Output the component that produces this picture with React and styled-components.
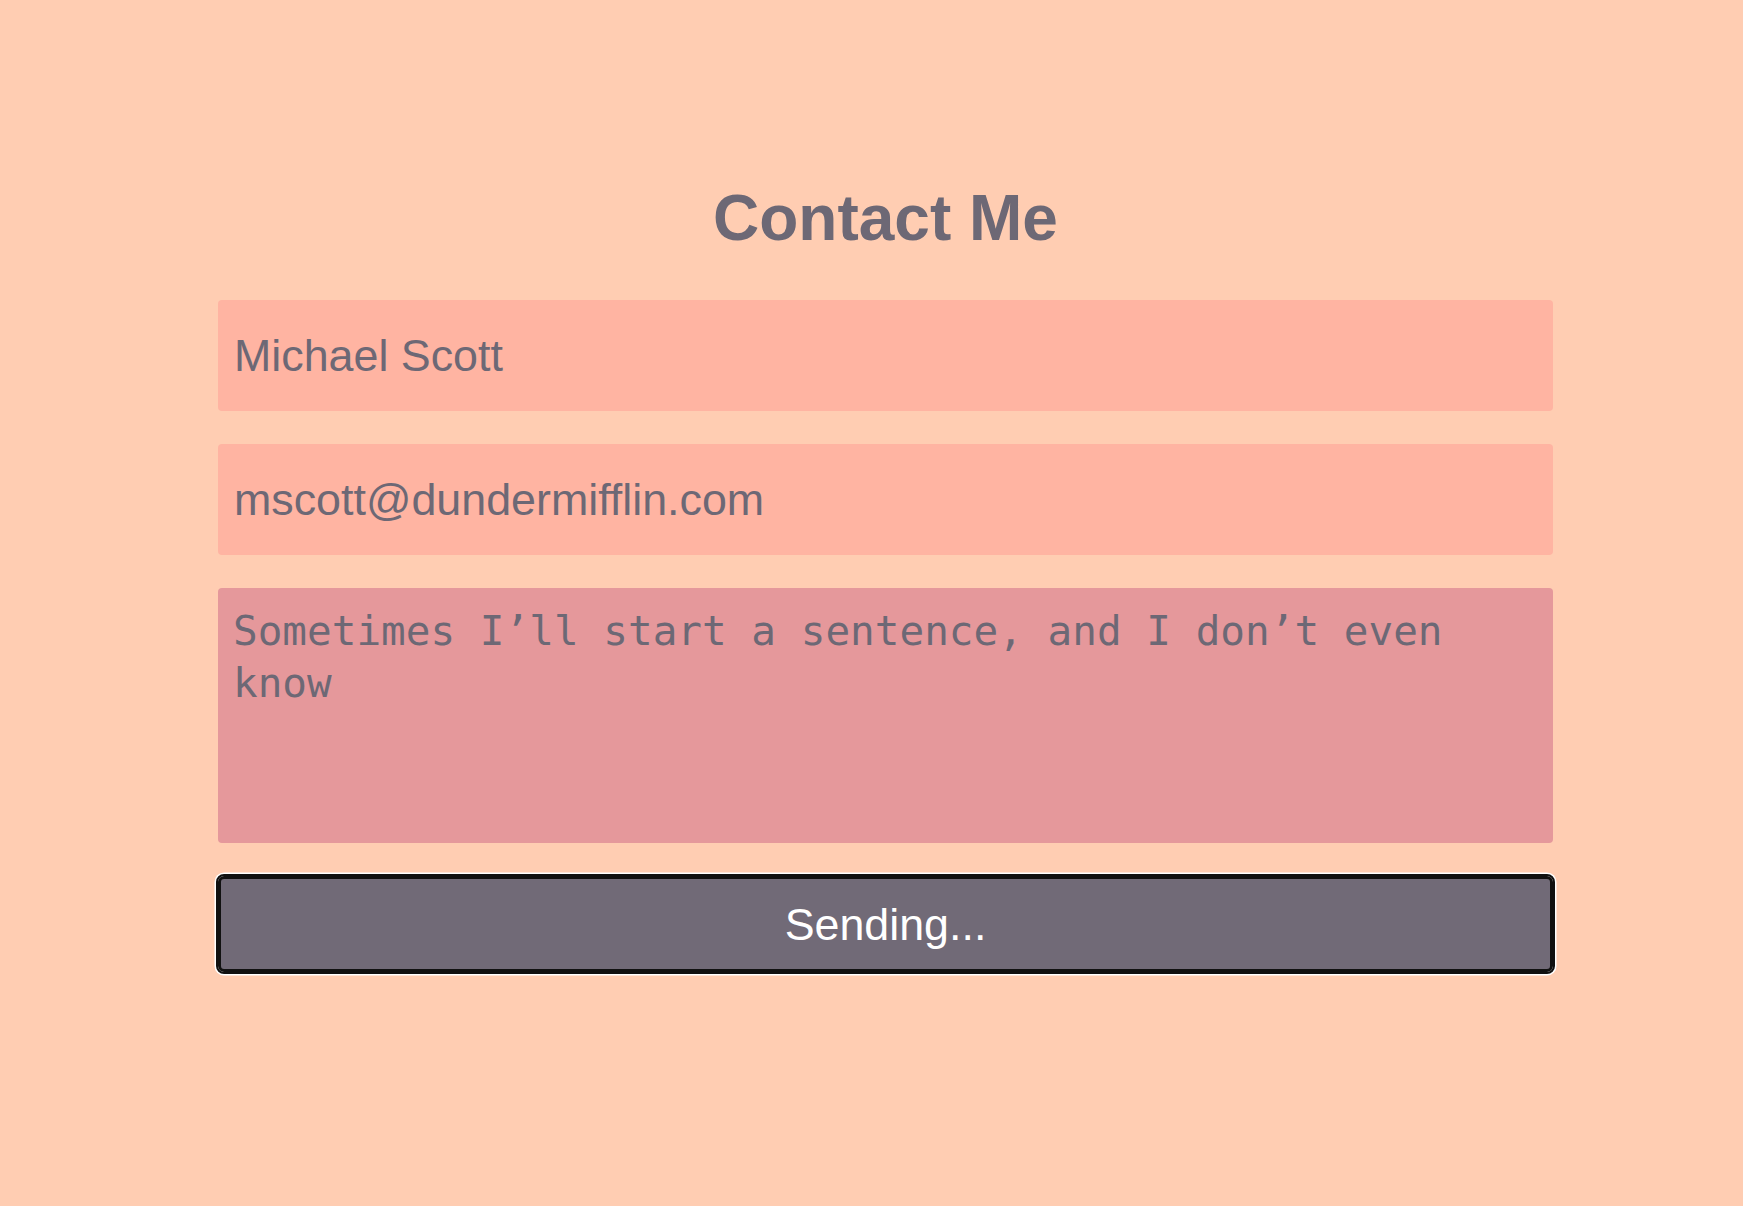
import React, { useState } from 'react';
import styled, { createGlobalStyle } from "styled-components";

const GlobalStyle = createGlobalStyle`
  html, body {
    margin: 0;
    padding: 0;
    background: #ffcdb2;
  }
`;

const Page = styled.div`
  min-height: 1206px;
  background: #ffcdb2;
  padding: 183px 190px 0 218px;
  box-sizing: border-box;
`;

const Title = styled.h1`
  margin: 0 0 47px;
  text-align: center;
  font-family: "Liberation Sans", Arial, sans-serif;
  font-size: 64px;
  line-height: 70px;
  font-weight: 700;
  color: #6d6875;
`;

const Form = styled.form`
  display: flex;
  flex-direction: column;
  gap: 33px;
`;

const Input = styled.input`
  box-sizing: border-box;
  height: 111px;
  padding: 0 15px 0 16px;
  border: none;
  border-radius: 4px;
  background: #ffb4a2;
  color: #6d6875;
  font-family: "Liberation Sans", Arial, sans-serif;
  font-size: 44.8px;
  outline: none;
`;

const Message = styled.textarea`
  box-sizing: border-box;
  height: 255px;
  padding: 17px 12px 16px 15px;
  border: none;
  border-radius: 4px;
  background: #e5989b;
  color: #6d6875;
  font-family: "DejaVu Sans Mono", "Liberation Mono", monospace;
  font-size: 41px;
  line-height: 52px;
  resize: none;
  overflow: hidden;
  outline: none;
`;

const SendButton = styled.button`
  box-sizing: border-box;
  height: 96px;
  margin-top: 0;
  border: 3px solid #111;
  border-radius: 6px;
  outline: 2px solid #111;
  box-shadow: 0 0 0 3.5px #fff;
  background: #716a77;
  color: #fff;
  font-family: "Liberation Sans", Arial, sans-serif;
  font-size: 44.8px;
  cursor: pointer;
`;

function App() {
  const [name, setName] = useState('Michael Scott');
  const [email, setEmail] = useState('mscott@dundermifflin.com');
  const [message, setMessage] = useState('Sometimes I\u2019ll start a sentence, and I don\u2019t even know');
  const [sending] = useState(true);

  return (
    <Page>
      <GlobalStyle />
      <Title>Contact Me</Title>
      <Form onSubmit={e => e.preventDefault()}>
        <Input type="text" value={name} onChange={e => setName(e.target.value)} />
        <Input type="email" value={email} onChange={e => setEmail(e.target.value)} />
        <Message value={message} onChange={e => setMessage(e.target.value)} />
        <SendButton type="submit">{sending ? 'Sending...' : 'Send'}</SendButton>
      </Form>
    </Page>
  );
}

export default App;
